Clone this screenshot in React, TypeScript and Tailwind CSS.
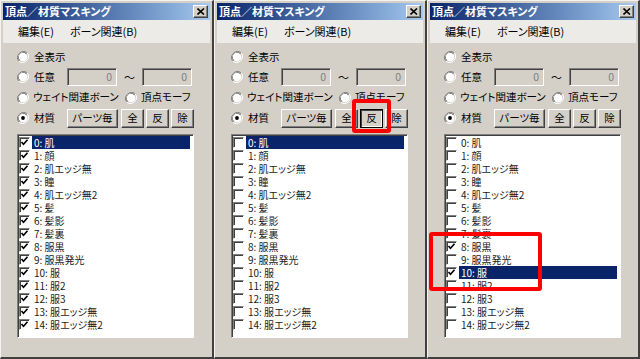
import React from 'react';

const ITEMS = [
  '肌', '顔', '肌エッジ無', '瞳', '肌エッジ無2', '髪', '髪影', '髪裏',
  '服黒', '服黒発光', '服', '服2', '服3', '服エッジ無', '服エッジ無2',
];

const raised =
  'border border-t-white border-l-white border-r-[#404040] border-b-[#404040] shadow-[inset_-1px_-1px_0_#808080]';
const sunken =
  'border border-t-[#808080] border-l-[#808080] border-r-white border-b-white shadow-[inset_1px_1px_0_#404040]';

function Radio({ on }: { on?: boolean }) {
  return (
    <svg width="12" height="12" viewBox="0 0 12 12" className="shrink-0">
      <path d="M10.2 1.8 A6 6 0 0 0 1.8 10.2" fill="none" stroke="#808080" strokeWidth="1" />
      <path d="M9.4 2.6 A4.9 4.9 0 0 0 2.6 9.4" fill="none" stroke="#404040" strokeWidth="1" />
      <path d="M1.8 10.2 A6 6 0 0 0 10.2 1.8" fill="none" stroke="#ffffff" strokeWidth="1" />
      <circle cx="6" cy="6" r="4.3" fill="#ffffff" />
      {on && <circle cx="6" cy="6" r="1.9" fill="#000000" />}
    </svg>
  );
}

function Check({ on }: { on: boolean }) {
  return (
    <div className={`w-[11px] h-[11px] shrink-0 bg-white ${sunken}`}>
      {on && (
        <svg width="9" height="9" viewBox="0 0 9 9" className="block">
          <polyline points="1.5,4 3.5,6.3 7.5,1.8" fill="none" stroke="#000" strokeWidth="1.6" />
        </svg>
      )}
    </div>
  );
}

function Btn({ label, w, pressed }: { label: string; w: string; pressed?: boolean }) {
  return (
    <div
      className={`${w} h-[19px] flex items-center justify-center text-[10.5px] leading-none text-black ${
        pressed
          ? 'border border-black shadow-[inset_1px_1px_0_#404040,inset_-1px_-1px_0_#ffffff]'
          : raised
      }`}
    >
      {label}
    </div>
  );
}

function Field() {
  return (
    <div className={`w-[50px] h-[18px] bg-[#d4d0c8] ${sunken} flex items-center justify-end pr-[4px] text-[10.5px] leading-none text-[#808080]`}>
      0
    </div>
  );
}

interface PanelProps {
  checked: boolean[];
  selected: number;
  pressedRev?: boolean;
  redRev?: boolean;
  redList?: boolean;
}

function Panel({ checked, selected, pressedRev, redRev, redList }: PanelProps) {
  return (
    <div className="relative h-[359px] bg-[#d4d0c8] border-t border-l border-t-[#f4f3f0] border-l-[#f4f3f0] border-r-2 border-b-2 border-r-[#404040] border-b-[#404040] p-[2px] flex flex-col">
      {/* title bar */}
      <div className="h-[17px] bg-linear-to-r from-[#0a246a] to-[#a6caf0] flex items-center justify-between pl-[2px] pr-[2px]">
        <span className="text-white font-bold text-[11px] leading-none [font-feature-settings:'palt']">
          頂点／材質マスキング
        </span>
        <div className={`w-[15px] h-[13px] bg-[#d4d0c8] ${raised} flex items-center justify-center`}>
          <svg width="8" height="7" viewBox="0 0 8 7">
            <path d="M0.5 0.5 L7 6.5 M7 0.5 L0.5 6.5" stroke="#000" strokeWidth="1.6" />
          </svg>
        </div>
      </div>

      {/* menu */}
      <div className="h-[23px] bg-[#ecebe8] flex items-center pl-[15px] gap-[16px] text-[11px] leading-none text-black [font-feature-settings:'palt']">
        <span>編集(E)</span>
        <span>ボーン関連(B)</span>
      </div>

      {/* body */}
      <div className="flex flex-col pl-[14px] pt-[4px] text-[10.5px] leading-none text-black [font-feature-settings:'palt']">
        <div className="h-[20px] flex items-center gap-[5px]">
          <Radio />
          <span>全表示</span>
        </div>
        <div className="h-[20px] flex items-center">
          <div className="w-[50px] flex items-center gap-[5px]">
            <Radio />
            <span>任意</span>
          </div>
          <Field />
          <div className="w-[25px] text-center text-[11px]">～</div>
          <Field />
        </div>
        <div className="h-[21px] flex items-center">
          <div className="w-[108px] flex items-center gap-[4px]">
            <Radio />
            <span className="whitespace-nowrap">ウェイト関連ボーン</span>
          </div>
          <div className="flex items-center gap-[4px]">
            <Radio />
            <span>頂点モーフ</span>
          </div>
        </div>
        <div className="h-[20px] flex items-center">
          <div className="w-[50px] flex items-center gap-[5px]">
            <Radio on />
            <span>材質</span>
          </div>
          <Btn label="パーツ毎" w="w-[51px]" />
          <div className="ml-[3px]">
            <Btn label="全" w="w-[23px]" />
          </div>
          <div className="relative ml-[2px]">
            <Btn label="反" w="w-[23px]" pressed={pressedRev} />
            {redRev && (
              <div className="absolute -left-[8px] -top-[10px] w-[39px] h-[34px] border-4 border-[#ff0000] rounded-[3px]" />
            )}
          </div>
          <div className="ml-[2px]">
            <Btn label="除" w="w-[23px]" />
          </div>
        </div>

        {/* list */}
        <div className={`mt-[6px] w-[177px] h-[204px] bg-white ${sunken} pt-[1px] pl-[1px] pr-[3px]`}>
          {ITEMS.map((name, i) => (
            <div key={i} className="h-[13px] flex items-center">
              <Check on={checked[i]} />
              <div
                className={`ml-[2px] flex-1 h-[13px] flex items-center pl-[2px] text-[10px] leading-[13px] whitespace-nowrap ${
                  i === selected ? 'bg-[#0a246a] text-white' : 'text-[#1a1a1a]'
                }`}
              >
                {`${i}: ${name}`}
              </div>
            </div>
          ))}
        </div>
      </div>

      {redList && (
        <div className="absolute left-[1px] top-[231px] w-[113px] h-[59px] border-4 border-[#ff0000] rounded-[3px]" />
      )}
    </div>
  );
}

export default function App() {
  const all = ITEMS.map(() => true);
  const none = ITEMS.map(() => false);
  const some = ITEMS.map((_, i) => i === 8 || i === 10);

  return (
    <div className="w-[640px] h-[359px] overflow-hidden grid grid-cols-[214px_213px_213px] font-['Noto_Sans_CJK_JP','Noto_Sans',sans-serif]">
      <Panel checked={all} selected={0} />
      <Panel checked={none} selected={0} pressedRev redRev />
      <Panel checked={some} selected={10} redList />
    </div>
  );
}
